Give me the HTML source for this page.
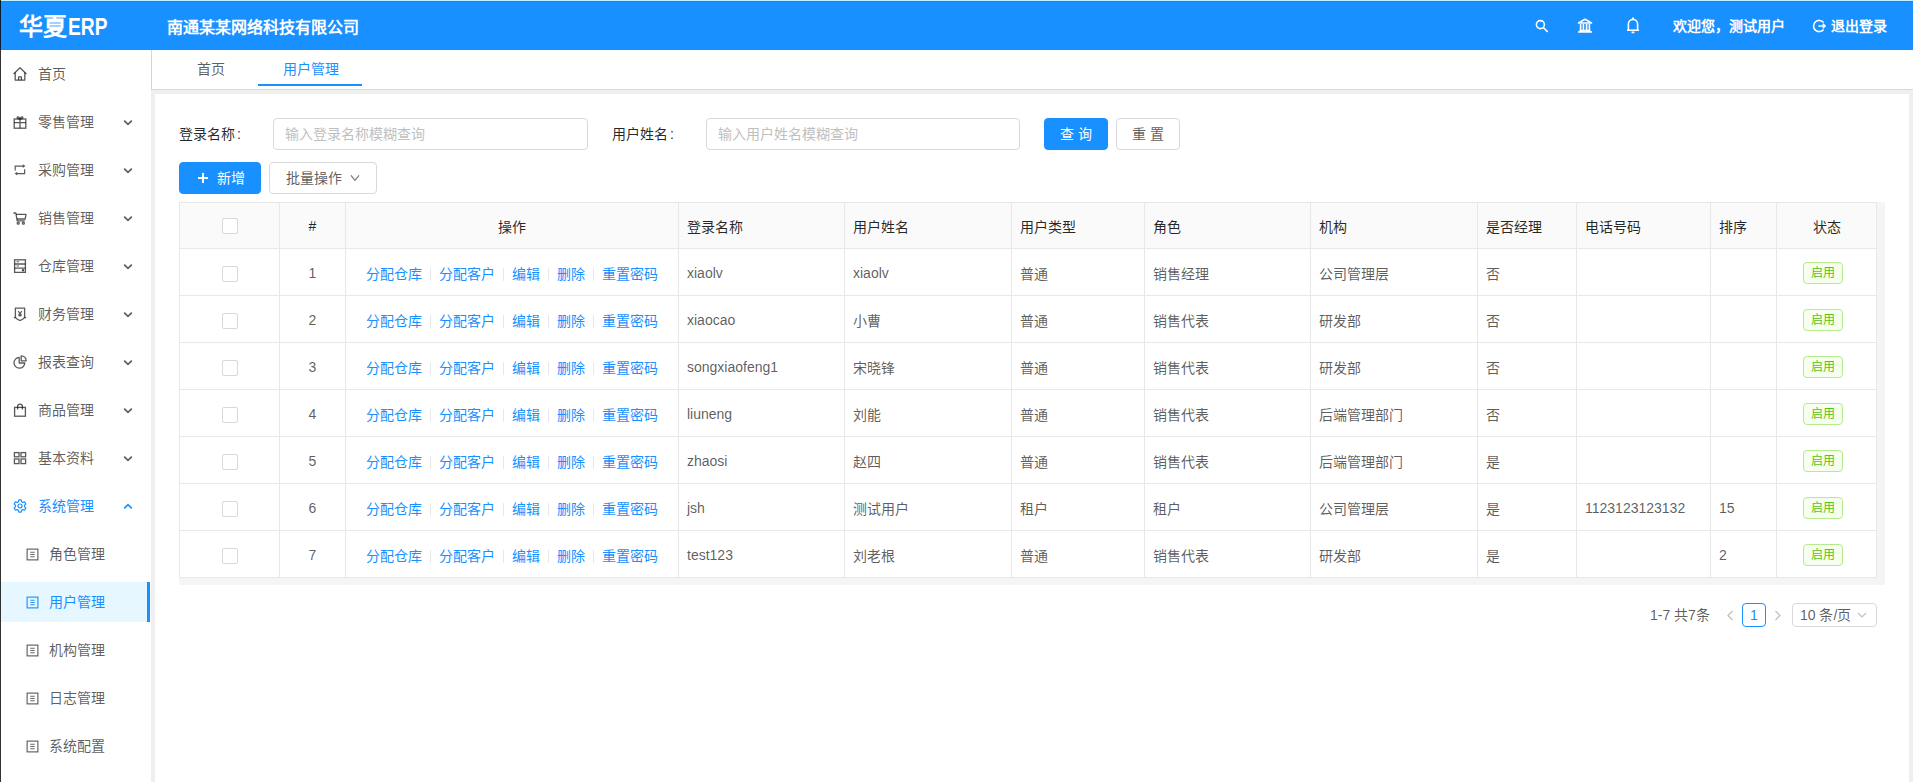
<!DOCTYPE html>
<html lang="zh-CN"><head><meta charset="utf-8">
<style>
*{box-sizing:border-box;margin:0;padding:0}
html,body{width:1913px;height:782px;overflow:hidden}
body{font-family:"Liberation Sans",sans-serif;font-size:14px;color:rgba(0,0,0,.65);background:#efefef;position:relative}
.abs{position:absolute}
#hdr{left:0;top:0;width:1913px;height:50px;background:#1890ff;color:#fff}
#edge{left:0;top:0;width:1px;height:782px;background:rgba(0,0,0,.8);z-index:50}
#topline{left:0;top:0;width:1913px;height:1px;background:#c0f2ff;z-index:49}
#topline2{left:0;top:1px;width:1913px;height:1px;background:#2c82d2;z-index:49}
#side{left:0;top:50px;width:151px;height:732px;background:#fff}
.mi{position:absolute;left:0;width:150px;height:40px;line-height:40px;white-space:nowrap}
.mi .ic{position:absolute;left:13px;top:13px;width:14px;height:14px}
.mi .tx{position:absolute;left:38px;top:0}
.mi .ar{position:absolute;left:123px;top:17px;width:10px;height:7px}
.sub .ic{left:26px;top:14px;width:13px;height:13px}
.sub .tx{left:49px}
.sel{background:#e6f7ff;color:#1890ff}
.sel::after{content:"";position:absolute;right:0;top:0;width:3px;height:40px;background:#1890ff}
#tabs{left:151px;top:50px;width:1762px;height:40px;background:#fff;border-left:1px solid #d4d4d4;border-bottom:1px solid #d9d9d9}
#card{left:155px;top:94px;width:1754px;height:700px;background:#fff}
.hic{position:absolute;fill:none;stroke:#fff;stroke-width:1.6}
.inp{position:absolute;height:32px;border:1px solid #d9d9d9;border-radius:4px;background:#fff;color:#bfbfbf;padding-left:11px;line-height:30px}
.btn{position:absolute;height:32px;border:1px solid #d9d9d9;border-radius:4px;background:#fff;color:rgba(0,0,0,.65);line-height:30px;text-align:center}
.btn.pri{background:#1890ff;border-color:#1890ff;color:#fff}
#tw{position:absolute;left:179px;top:202px;width:1706px;height:383px;background:#f5f5f5}
#tb{position:absolute;left:0;top:0;border-collapse:collapse;table-layout:fixed;width:1697px;background:#fff}
#tb th,#tb td{border:1px solid #e8e8e8;padding:0 8px;white-space:nowrap;overflow:hidden}
#tb th{height:46px;background:#fafafa;color:rgba(0,0,0,.85);font-weight:normal}
#tb td{height:47px;padding-top:2px}
#tb .c{text-align:center}
#tb .l{text-align:left}
.cb{display:inline-block;width:16px;height:16px;border:1px solid #d9d9d9;border-radius:2px;background:#fff;vertical-align:middle}
.acts a{color:#1890ff}
.acts i{display:inline-block;width:1px;height:13px;background:#e8e8e8;margin:0 8px;vertical-align:middle;position:relative;top:-1px}
.tag{display:inline-block;margin-right:8px;height:22px;line-height:20px;padding:0 7px;font-size:12px;border:1px solid #b7eb8f;background:#f6ffed;color:#52c41a;border-radius:4px}
</style></head><body>
<div id="topline" class="abs"></div><div id="topline2" class="abs"></div>
<div id="edge" class="abs"></div>
<div id="hdr" class="abs">
  <div class="abs" style="left:19px;top:12px;font-size:24px;font-weight:bold;line-height:30px;white-space:nowrap">华夏<span style="display:inline-block;font-size:24px;transform:scaleX(0.8);transform-origin:0 0;position:relative;left:1px">ERP</span></div>
  <div class="abs" style="left:167px;top:17px;font-size:16px;line-height:22px;font-weight:600">南通某某网络科技有限公司</div>
  <svg class="hic" style="left:1535px;top:19px" width="14" height="14" viewBox="0 0 14 14"><circle cx="5.4" cy="5.6" r="4"/><path d="M8.3 8.5l4.4 4.4"/></svg>
  <svg class="hic" style="left:1577px;top:18px" width="16" height="15" viewBox="0 0 16 15"><path d="M1.5 5L8 1.2 14.5 5z" stroke-linejoin="round"/><path d="M1 14h14M2.5 12.6h11M3.6 6v6.2M6.4 6v6.2M9.6 6v6.2M12.4 6v6.2"/></svg>
  <svg class="hic" style="left:1626px;top:17px" width="14" height="17" viewBox="0 0 14 17"><path d="M2.4 13V7a4.6 4.6 0 0 1 9.2 0v6"/><path d="M1 13.2h12"/><path d="M7 0.6v1.8M5.6 15.4h2.8" stroke-width="1.8"/></svg>
  <div class="abs" style="left:1673px;top:15px;line-height:22px;font-weight:600">欢迎您，测试用户</div>
  <svg class="hic" style="left:1812px;top:19px" width="14" height="14" viewBox="0 0 14 14"><path d="M11.6 3.6A5.6 5.6 0 1 0 11.6 10.4"/><path d="M6.4 7h6.6M10.8 4.8L13 7l-2.2 2.2"/></svg>
  <div class="abs" style="left:1831px;top:15px;line-height:22px;font-weight:600">退出登录</div>
</div>
<div id="side" class="abs">
<div class="mi" style="top:4px"><svg class="ic" viewBox="0 0 14 14" fill="none" stroke="currentColor" stroke-width="1.3" stroke-linejoin="round"><path d="M0.6 7L7 0.8 13.4 7"/><path d="M2.2 5.4v7.8h9.6V5.4"/><path d="M5.6 13.2V9.8h2.8v3.4"/></svg><span class="tx">首页</span></div>
<div class="mi" style="top:52px"><svg class="ic" viewBox="0 0 14 14" fill="none" stroke="currentColor" stroke-width="1.3"><rect x="1.2" y="4" width="11.6" height="9.2"/><path d="M1.2 7.6h11.6M7 4v9.2"/><path d="M7 4C6 1.6 4 1.4 4.2 2.8 4.4 4 7 4 7 4zM7 4c1-2.4 3-2.6 2.8-1.2C9.6 4 7 4 7 4z"/></svg><span class="tx">零售管理</span><svg class="ar" viewBox="0 0 10 7" fill="none" stroke="currentColor" stroke-width="1.6"><path d="M1.2 1.6l3.8 3.8 3.8-3.8"/></svg></div>
<div class="mi" style="top:100px"><svg class="ic" viewBox="0 0 14 14" fill="none" stroke="currentColor" stroke-width="1.2"><path d="M2.2 7.6V3.1h7.8M11.6 6.2v4.4H4"/><path d="M9.8 1.3l2.6 1.8-2.6 1.8z" fill="currentColor" stroke="none"/><path d="M4.2 8.8L1.6 10.6l2.6 1.8z" fill="currentColor" stroke="none"/></svg><span class="tx">采购管理</span><svg class="ar" viewBox="0 0 10 7" fill="none" stroke="currentColor" stroke-width="1.6"><path d="M1.2 1.6l3.8 3.8 3.8-3.8"/></svg></div>
<div class="mi" style="top:148px"><svg class="ic" viewBox="0 0 14 14" fill="none" stroke="currentColor" stroke-width="1.3" stroke-linejoin="round"><path d="M0.4 2h2.4l1.4 7.8h7.6"/><path d="M3 3.4h10L12.2 8H4"/><circle cx="5.2" cy="12.2" r="1"/><circle cx="10.4" cy="12.2" r="1"/></svg><span class="tx">销售管理</span><svg class="ar" viewBox="0 0 10 7" fill="none" stroke="currentColor" stroke-width="1.6"><path d="M1.2 1.6l3.8 3.8 3.8-3.8"/></svg></div>
<div class="mi" style="top:196px"><svg class="ic" viewBox="0 0 14 14" fill="none" stroke="currentColor" stroke-width="1.3"><rect x="1.6" y="0.8" width="10.8" height="12.6"/><path d="M1.6 5h10.8M1.6 9.2h10.8"/><path d="M3.6 2.8h2.4M3.6 7h2.4" stroke-width="1.1"/><circle cx="10" cy="11.3" r=".6" fill="currentColor"/></svg><span class="tx">仓库管理</span><svg class="ar" viewBox="0 0 10 7" fill="none" stroke="currentColor" stroke-width="1.6"><path d="M1.2 1.6l3.8 3.8 3.8-3.8"/></svg></div>
<div class="mi" style="top:244px"><svg class="ic" viewBox="0 0 14 14" fill="none" stroke="currentColor" stroke-width="1.3" stroke-linejoin="round"><path d="M2.4 1.2h9.2v9.4l-2 1.6-2.6 1.4-2.6-1.4-2-1.6z"/><path d="M1 10.8l1.4-.4M13 10.8l-1.4-.4"/><path d="M5.2 4.2L7 6.6l1.8-2.4M7 6.6v3M5.4 7.4h3.2M5.4 8.6h3.2" stroke-width="1.1"/></svg><span class="tx">财务管理</span><svg class="ar" viewBox="0 0 10 7" fill="none" stroke="currentColor" stroke-width="1.6"><path d="M1.2 1.6l3.8 3.8 3.8-3.8"/></svg></div>
<div class="mi" style="top:292px"><svg class="ic" viewBox="0 0 14 14" fill="none" stroke="currentColor" stroke-width="1.3" stroke-linejoin="round"><path d="M6.2 2.4A5.4 5.4 0 1 0 11.8 8H6.2z"/><path d="M8.2 0.8v5h5A5.2 5.2 0 0 0 8.2 0.8z"/></svg><span class="tx">报表查询</span><svg class="ar" viewBox="0 0 10 7" fill="none" stroke="currentColor" stroke-width="1.6"><path d="M1.2 1.6l3.8 3.8 3.8-3.8"/></svg></div>
<div class="mi" style="top:340px"><svg class="ic" viewBox="0 0 14 14" fill="none" stroke="currentColor" stroke-width="1.3"><rect x="1.6" y="4.4" width="10.8" height="8.8"/><path d="M4.6 6.6V3.6a2.4 2.4 0 0 1 4.8 0v3"/></svg><span class="tx">商品管理</span><svg class="ar" viewBox="0 0 10 7" fill="none" stroke="currentColor" stroke-width="1.6"><path d="M1.2 1.6l3.8 3.8 3.8-3.8"/></svg></div>
<div class="mi" style="top:388px"><svg class="ic" viewBox="0 0 14 14" fill="none" stroke="currentColor" stroke-width="1.3"><rect x="1.4" y="1.6" width="4.6" height="4.2"/><rect x="8" y="1.6" width="4.6" height="4.2"/><rect x="1.4" y="8" width="4.6" height="4.6"/><rect x="8" y="8" width="4.6" height="4.6"/></svg><span class="tx">基本资料</span><svg class="ar" viewBox="0 0 10 7" fill="none" stroke="currentColor" stroke-width="1.6"><path d="M1.2 1.6l3.8 3.8 3.8-3.8"/></svg></div>
<div class="mi" style="top:436px;color:#1890ff"><svg class="ic" viewBox="0 0 14 14" fill="none" stroke="currentColor" stroke-width="1.2" stroke-linejoin="round"><path d="M5.31 2.83 L5.82 0.91 L8.18 0.91 L8.69 2.83 L9.77 3.45 L11.68 2.93 L12.86 4.98 L11.46 6.37 L11.46 7.63 L12.86 9.02 L11.68 11.07 L9.77 10.55 L8.69 11.17 L8.18 13.09 L5.82 13.09 L5.31 11.17 L4.23 10.55 L2.32 11.07 L1.14 9.02 L2.54 7.63 L2.54 6.37 L1.14 4.98 L2.32 2.93 L4.23 3.45Z"/><circle cx="7" cy="7" r="2"/></svg><span class="tx">系统管理</span><svg class="ar" viewBox="0 0 10 7" fill="none" stroke="currentColor" stroke-width="1.6"><path d="M1.2 5.4l3.8-3.8 3.8 3.8"/></svg></div>
<div class="mi sub" style="top:484px"><svg class="ic" viewBox="0 0 14 14" fill="none" stroke="currentColor" stroke-width="1.2"><rect x="1.2" y="1.2" width="11.6" height="11.6"/><path d="M4.6 4.6h4.8M4.6 7h4.8M4.6 9.4h4.8" stroke-width="1"/></svg><span class="tx">角色管理</span></div>
<div class="mi sub sel" style="top:532px"><svg class="ic" viewBox="0 0 14 14" fill="none" stroke="currentColor" stroke-width="1.2"><rect x="1.2" y="1.2" width="11.6" height="11.6"/><path d="M4.6 4.6h4.8M4.6 7h4.8M4.6 9.4h4.8" stroke-width="1"/></svg><span class="tx">用户管理</span></div>
<div class="mi sub" style="top:580px"><svg class="ic" viewBox="0 0 14 14" fill="none" stroke="currentColor" stroke-width="1.2"><rect x="1.2" y="1.2" width="11.6" height="11.6"/><path d="M4.6 4.6h4.8M4.6 7h4.8M4.6 9.4h4.8" stroke-width="1"/></svg><span class="tx">机构管理</span></div>
<div class="mi sub" style="top:628px"><svg class="ic" viewBox="0 0 14 14" fill="none" stroke="currentColor" stroke-width="1.2"><rect x="1.2" y="1.2" width="11.6" height="11.6"/><path d="M4.6 4.6h4.8M4.6 7h4.8M4.6 9.4h4.8" stroke-width="1"/></svg><span class="tx">日志管理</span></div>
<div class="mi sub" style="top:676px"><svg class="ic" viewBox="0 0 14 14" fill="none" stroke="currentColor" stroke-width="1.2"><rect x="1.2" y="1.2" width="11.6" height="11.6"/><path d="M4.6 4.6h4.8M4.6 7h4.8M4.6 9.4h4.8" stroke-width="1"/></svg><span class="tx">系统配置</span></div>
</div>
<div id="tabs" class="abs">
  <div class="abs" style="left:45px;top:8px;line-height:22px;color:rgba(0,0,0,.65)">首页</div>
  <div class="abs" style="left:131px;top:8px;line-height:22px;color:#1890ff">用户管理</div>
  <div class="abs" style="left:106px;top:34px;width:104px;height:2px;background:#1890ff"></div>
</div>
<div id="card" class="abs"></div>
<div class="abs" style="left:179px;top:123px;line-height:22px;color:rgba(0,0,0,.85)">登录名称<span style="margin-left:2px">:</span></div>
<div class="inp" style="left:273px;top:118px;width:315px">输入登录名称模糊查询</div>
<div class="abs" style="left:612px;top:123px;line-height:22px;color:rgba(0,0,0,.85)">用户姓名<span style="margin-left:2px">:</span></div>
<div class="inp" style="left:706px;top:118px;width:314px">输入用户姓名模糊查询</div>
<div class="btn pri" style="left:1044px;top:118px;width:64px">查 询</div>
<div class="btn" style="left:1116px;top:118px;width:64px">重 置</div>
<div class="btn pri" style="left:179px;top:162px;width:82px"><svg width="10" height="10" viewBox="0 0 10 10" style="position:absolute;left:18px;top:10px" fill="none" stroke="#fff" stroke-width="2"><path d="M5 0v10M0 5h10"/></svg><span style="position:absolute;left:37px;top:0">新增</span></div>
<div class="btn" style="left:269px;top:162px;width:108px">批量操作 <svg width="10" height="8" viewBox="0 0 10 8" fill="none" stroke="rgba(0,0,0,.55)" stroke-width="1.1" style="margin-left:4px;vertical-align:middle;position:relative;top:-1px"><path d="M1 1.4l4 5 4-5"/></svg></div>
<div id="tw">
<table id="tb"><colgroup><col style="width:100px"><col style="width:66px"><col style="width:333px"><col style="width:166px"><col style="width:167px"><col style="width:133px"><col style="width:166px"><col style="width:167px"><col style="width:99px"><col style="width:134px"><col style="width:66px"><col style="width:100px"></colgroup><thead><tr><th class="c"><span class="cb"></span></th><th class="c">#</th><th class="c">操作</th><th class="l">登录名称</th><th class="l">用户姓名</th><th class="l">用户类型</th><th class="l">角色</th><th class="l">机构</th><th class="l">是否经理</th><th class="l">电话号码</th><th class="l">排序</th><th class="c">状态</th></tr></thead><tbody><tr><td class="c"><span class="cb"></span></td><td class="c">1</td><td class="c"><span class="acts"><a>分配仓库</a><i></i><a>分配客户</a><i></i><a>编辑</a><i></i><a>删除</a><i></i><a>重置密码</a></span></td><td class="l">xiaolv</td><td class="l">xiaolv</td><td class="l">普通</td><td class="l">销售经理</td><td class="l">公司管理层</td><td class="l">否</td><td class="l"></td><td class="l"></td><td class="c"><span class="tag">启用</span></td></tr>
<tr><td class="c"><span class="cb"></span></td><td class="c">2</td><td class="c"><span class="acts"><a>分配仓库</a><i></i><a>分配客户</a><i></i><a>编辑</a><i></i><a>删除</a><i></i><a>重置密码</a></span></td><td class="l">xiaocao</td><td class="l">小曹</td><td class="l">普通</td><td class="l">销售代表</td><td class="l">研发部</td><td class="l">否</td><td class="l"></td><td class="l"></td><td class="c"><span class="tag">启用</span></td></tr>
<tr><td class="c"><span class="cb"></span></td><td class="c">3</td><td class="c"><span class="acts"><a>分配仓库</a><i></i><a>分配客户</a><i></i><a>编辑</a><i></i><a>删除</a><i></i><a>重置密码</a></span></td><td class="l">songxiaofeng1</td><td class="l">宋晓锋</td><td class="l">普通</td><td class="l">销售代表</td><td class="l">研发部</td><td class="l">否</td><td class="l"></td><td class="l"></td><td class="c"><span class="tag">启用</span></td></tr>
<tr><td class="c"><span class="cb"></span></td><td class="c">4</td><td class="c"><span class="acts"><a>分配仓库</a><i></i><a>分配客户</a><i></i><a>编辑</a><i></i><a>删除</a><i></i><a>重置密码</a></span></td><td class="l">liuneng</td><td class="l">刘能</td><td class="l">普通</td><td class="l">销售代表</td><td class="l">后端管理部门</td><td class="l">否</td><td class="l"></td><td class="l"></td><td class="c"><span class="tag">启用</span></td></tr>
<tr><td class="c"><span class="cb"></span></td><td class="c">5</td><td class="c"><span class="acts"><a>分配仓库</a><i></i><a>分配客户</a><i></i><a>编辑</a><i></i><a>删除</a><i></i><a>重置密码</a></span></td><td class="l">zhaosi</td><td class="l">赵四</td><td class="l">普通</td><td class="l">销售代表</td><td class="l">后端管理部门</td><td class="l">是</td><td class="l"></td><td class="l"></td><td class="c"><span class="tag">启用</span></td></tr>
<tr><td class="c"><span class="cb"></span></td><td class="c">6</td><td class="c"><span class="acts"><a>分配仓库</a><i></i><a>分配客户</a><i></i><a>编辑</a><i></i><a>删除</a><i></i><a>重置密码</a></span></td><td class="l">jsh</td><td class="l">测试用户</td><td class="l">租户</td><td class="l">租户</td><td class="l">公司管理层</td><td class="l">是</td><td class="l">1123123123132</td><td class="l">15</td><td class="c"><span class="tag">启用</span></td></tr>
<tr><td class="c"><span class="cb"></span></td><td class="c">7</td><td class="c"><span class="acts"><a>分配仓库</a><i></i><a>分配客户</a><i></i><a>编辑</a><i></i><a>删除</a><i></i><a>重置密码</a></span></td><td class="l">test123</td><td class="l">刘老根</td><td class="l">普通</td><td class="l">销售代表</td><td class="l">研发部</td><td class="l">是</td><td class="l"></td><td class="l">2</td><td class="c"><span class="tag">启用</span></td></tr></tbody></table>
</div>
<div class="abs" style="left:1650px;top:604px;line-height:22px">1-7 共7条</div>
<svg class="abs" style="left:1726px;top:610px" width="8" height="11" viewBox="0 0 8 11" fill="none" stroke="#bfbfbf" stroke-width="1.2"><path d="M6.5 1L2 5.5 6.5 10"/></svg>
<div class="abs" style="left:1742px;top:603px;width:24px;height:24px;border:1px solid #1890ff;border-radius:4px;color:#1890ff;text-align:center;line-height:22px">1</div>
<svg class="abs" style="left:1774px;top:610px" width="8" height="11" viewBox="0 0 8 11" fill="none" stroke="#bfbfbf" stroke-width="1.2"><path d="M1.5 1L6 5.5 1.5 10"/></svg>
<div class="abs" style="left:1792px;top:603px;width:85px;height:24px;border:1px solid #d9d9d9;border-radius:4px;line-height:22px;padding-left:7px">10 条/页<svg width="10" height="6" viewBox="0 0 10 6" fill="none" stroke="#bfbfbf" stroke-width="1.1" style="position:absolute;left:64px;top:8px"><path d="M1 1l4 4 4-4"/></svg></div>
</body></html>
